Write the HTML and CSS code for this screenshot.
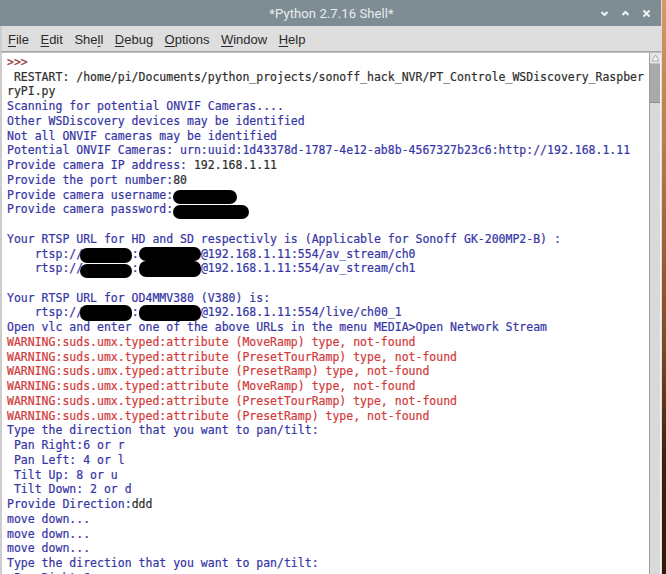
FILE: index.html
```html
<!DOCTYPE html>
<html>
<head>
<meta charset="utf-8">
<title>*Python 2.7.16 Shell*</title>
<link rel="stylesheet" href="styles.css">
</head>
<body>
<div class="screen">
  <div class="window">
    <div class="titlebar">
      <div class="title-spacer"></div>
      <div class="title">*Python 2.7.16 Shell*</div>
      <div class="controls">
        <svg class="ctl" width="9" height="9" viewBox="0 0 9 9"><polyline points="1.5,3 4.5,6 7.5,3" fill="none" stroke="#f2f4f5" stroke-width="2"/></svg>
        <svg class="ctl" width="9" height="9" viewBox="0 0 9 9"><polyline points="1.5,6 4.5,3 7.5,6" fill="none" stroke="#f2f4f5" stroke-width="2"/></svg>
        <svg class="ctl" width="9" height="9" viewBox="0 0 9 9"><path d="M1.5,1.5 L7.5,7.5 M7.5,1.5 L1.5,7.5" fill="none" stroke="#f2f4f5" stroke-width="2"/></svg>
      </div>
    </div>
    <div class="menubar">
      <span class="menu"><u>F</u>ile</span>
      <span class="menu"><u>E</u>dit</span>
      <span class="menu">She<u>l</u>l</span>
      <span class="menu"><u>D</u>ebug</span>
      <span class="menu"><u>O</u>ptions</span>
      <span class="menu"><u>W</u>indow</span>
      <span class="menu"><u>H</u>elp</span>
    </div>
    <div class="editor">
<pre class="text"><span class="p">&gt;&gt;&gt; </span>
<span class="k"> RESTART: /home/pi/Documents/python_projects/sonoff_hack_NVR/PT_Controle_WSDiscovery_Raspber</span>
<span class="k">ryPI.py</span>
<span class="o">Scanning for potential ONVIF Cameras....
Other WSDiscovery devices may be identified
Not all ONVIF cameras may be identified
Potential ONVIF Cameras: urn:uuid:1d43378d-1787-4e12-ab8b-4567327b23c6:http://192.168.1.11
Provide camera IP address: </span><span class="k">192.168.1.11</span>
<span class="o">Provide the port number:</span><span class="k">80</span>
<span class="o">Provide camera username:</span><span class="r r-user">         </span>
<span class="o">Provide camera password:</span><span class="r r-pass">           </span>

<span class="o">Your RTSP URL for HD and SD respectivly is (Applicable for Sonoff GK-200MP2-B) :
    rtsp://<span class="r r-a r-low">       </span>:<span class="r r-b">         </span>@192.168.1.11:554/av_stream/ch0
    rtsp://<span class="r r-a r-lower">       </span>:<span class="r r-b r-tall">         </span>@192.168.1.11:554/av_stream/ch1

Your RTSP URL for OD4MMV380 (V380) is:
    rtsp://<span class="r r-a r-tall">       </span>:<span class="r r-b r-tall">         </span>@192.168.1.11:554/live/ch00_1
Open vlc and enter one of the above URLs in the menu MEDIA&gt;Open Network Stream</span>
<span class="e">WARNING:suds.umx.typed:attribute (MoveRamp) type, not-found
WARNING:suds.umx.typed:attribute (PresetTourRamp) type, not-found
WARNING:suds.umx.typed:attribute (PresetRamp) type, not-found
WARNING:suds.umx.typed:attribute (MoveRamp) type, not-found
WARNING:suds.umx.typed:attribute (PresetTourRamp) type, not-found
WARNING:suds.umx.typed:attribute (PresetRamp) type, not-found</span>
<span class="o">Type the direction that you want to pan/tilt:
 Pan Right:6 or r
 Pan Left: 4 or l
 Tilt Up: 8 or u
 Tilt Down: 2 or d
Provide Direction:</span><span class="k">ddd</span>
<span class="o">move down...
move down...
move down...
Type the direction that you want to pan/tilt:
 Pan Right:6 or r</span></pre>
      <div class="scrollbar">
        <div class="arrow">
          <svg width="9" height="8" viewBox="0 0 9 8"><polygon points="4.5,1 8,7 1,7" fill="#f4f4f4" stroke="#9a9a9a" stroke-width="0.8"/></svg>
        </div>
        <div class="thumb"></div>
        <div class="trough"></div>
      </div>
    </div>
  </div>
  <div class="desktop"></div>
</div>
</body>
</html>
```

FILE: styles.css
```css
html, body {
  margin: 0;
  padding: 0;
  width: 666px;
  height: 574px;
  overflow: hidden;
  background: #3a2414;
}

.screen {
  display: flex;
  width: 666px;
  height: 574px;
}

.window {
  width: 661px;
  height: 574px;
  display: flex;
  flex-direction: column;
  background: #ffffff;
}

.desktop {
  flex: 1;
  background: linear-gradient(to bottom, #d29b6a 0%, #b77d4e 25%, #7a4a2a 60%, #3a2212 80%, #2e1a0e 100%);
  border-left: 1px solid #e8d8c8;
}

/* Title bar */
.titlebar {
  height: 26px;
  flex: none;
  background: #7e8c94;
  display: grid;
  grid-template-columns: 1fr auto 1fr;
  align-items: center;
}

.title {
  font-family: Roboto, "Liberation Sans", sans-serif;
  font-size: 13px;
  color: #e9eced;
  letter-spacing: 0.1px;
  padding-left: 2px;
}

.controls {
  justify-self: end;
  display: flex;
  gap: 12px;
  padding-right: 10px;
  align-items: center;
}

.ctl {
  display: block;
}

/* Menu bar */
.menubar {
  height: 26px;
  flex: none;
  box-sizing: border-box;
  background: #dedede;
  border-bottom: 1px solid #a4a4a4;
  border-left: 2px solid #cdcdcd;
  display: flex;
  align-items: center;
  gap: 11.5px;
  padding-left: 6px;
  padding-top: 1px;
  font-family: "Liberation Sans", Arial, sans-serif;
  font-size: 13px;
  color: #2b2b2b;
}

.menu u {
  text-decoration-thickness: 1px;
  text-underline-offset: 2px;
}

/* Editor */
.editor {
  flex: 1;
  display: flex;
  min-height: 0;
  border-left: 2px solid #cdcdcd;
  border-top: 1px solid #bdbdbd;
}

.text {
  flex: 1;
  margin: 0;
  padding: 2px 0 0 5px;
  overflow: hidden;
  font-family: "DejaVu Sans Mono", monospace;
  font-size: 11.5px;
  line-height: 14.73px;
  color: #2e2e2e;
  white-space: pre;
  -webkit-text-stroke: 0.2px currentColor;
}

.p { color: #a03a3a; }
.k { color: #2e2e2e; }
.o { color: #3535a6; }
.e { color: #d23a3a; }

.r {
  color: transparent;
  background: #000;
  border-radius: 7px;
  position: relative;
  top: 2px;
}

.r-user { padding-right: 2px; }
.r-pass { top: 2.5px; }
.r-a { margin-left: -3px; padding-left: 3px; }
.r-b { top: 0; }
.r-low { top: 1px; padding-bottom: 1px; }
.r-lower { top: 2.5px; }
.r-tall { top: 0; padding-bottom: 2px; }

/* Scrollbar */
.scrollbar {
  width: 10px;
  flex: none;
  display: flex;
  flex-direction: column;
  border-left: 1px solid #9c9c9c;
  border-right: 1px solid #f4f4f4;
  background: #d9d9d9;
}

.arrow {
  height: 10px;
  display: flex;
  align-items: center;
  justify-content: center;
  background: #e4e4e4;
}

.thumb {
  height: 38px;
  background: #a9a9a9;
  border-top: 1px solid #c4c4c4;
  border-bottom: 1px solid #8e8e8e;
}

.trough {
  flex: 1;
  background: #d9d9d9;
}
```
